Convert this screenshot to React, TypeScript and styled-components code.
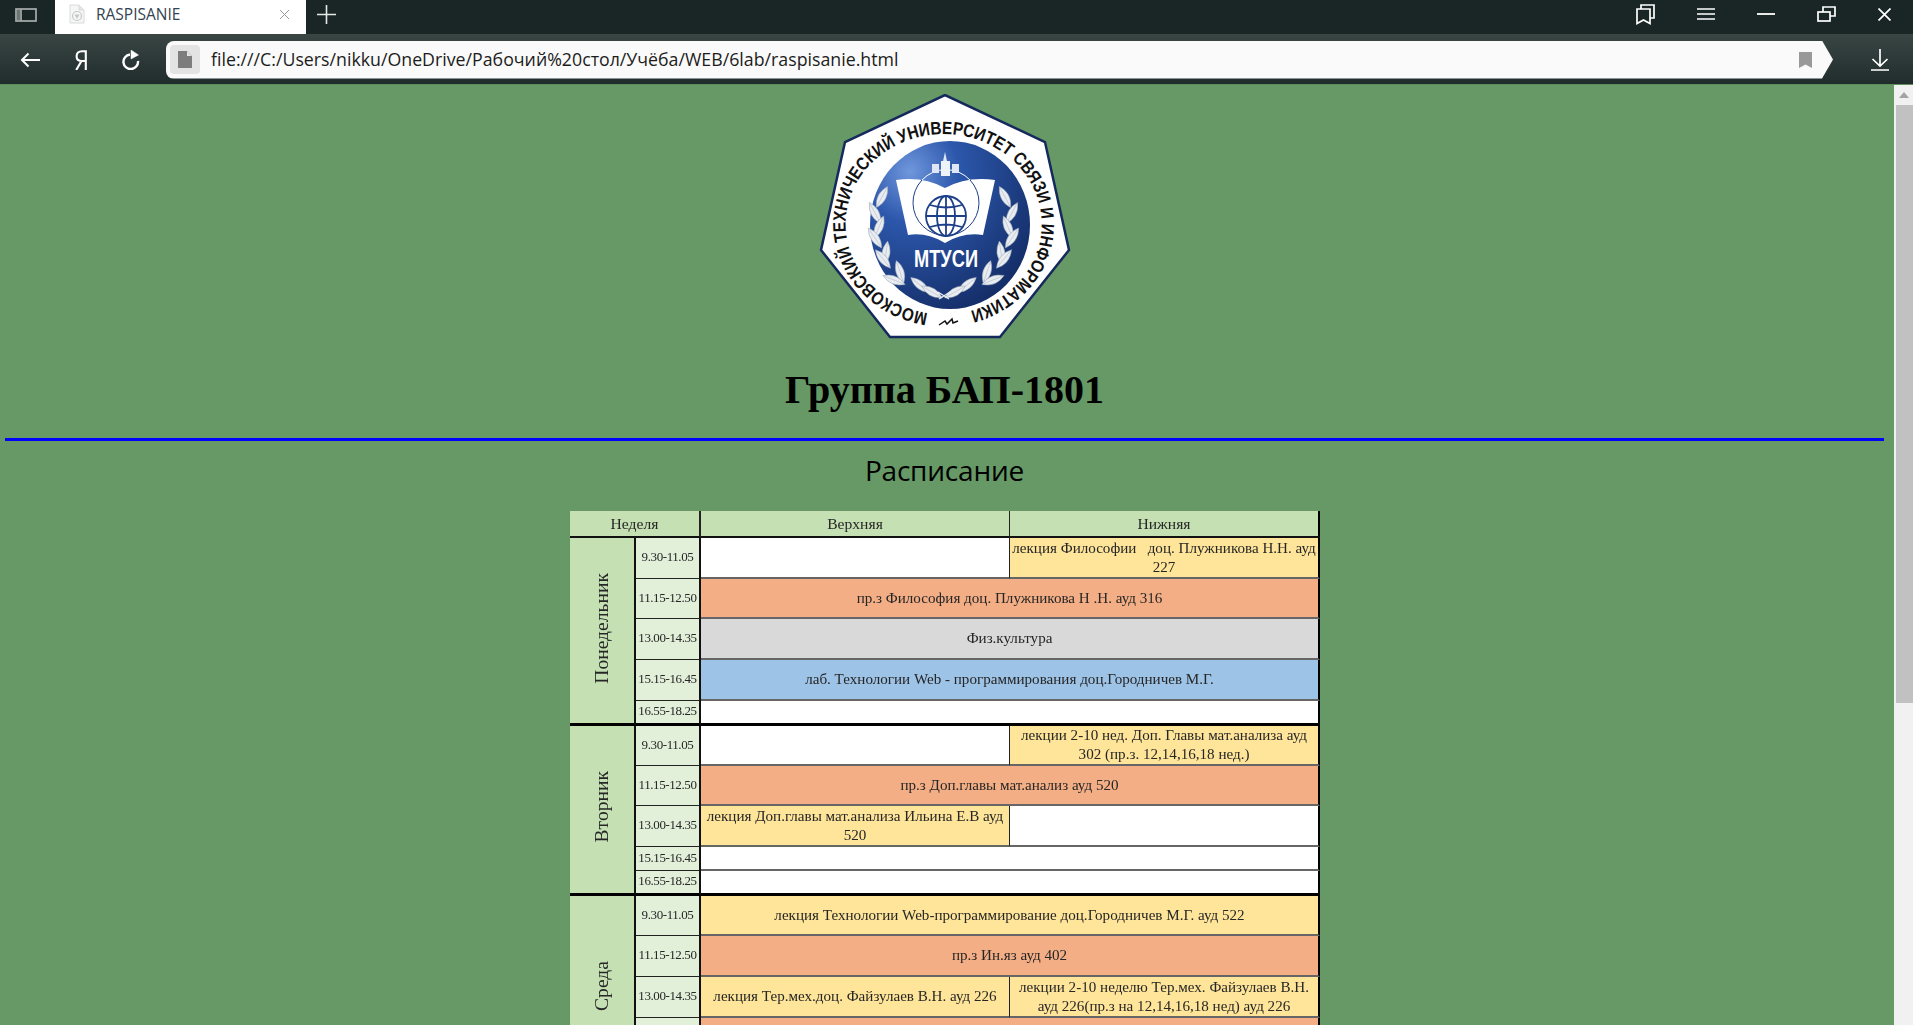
import styled, { createGlobalStyle } from 'styled-components'

const GlobalStyle = createGlobalStyle`
	html, body {
		margin: 0;
		padding: 0;
		height: 100%;
		overflow: hidden;
		background: #669966;
	}
`

const Window = styled.div`
	display: flex;
	flex-direction: column;
	width: 1913px;
	height: 1025px;
	overflow: hidden;
`

const TabBar = styled.div`
	display: flex;
	align-items: stretch;
	flex: 0 0 34px;
	background: #1a2625;
	color: #fff;
`

const SideToggle = styled.div`
	display: flex;
	align-items: center;
	width: 55px;
	padding: 0 0 4px 15px;
	box-sizing: border-box;
`

const Tab = styled.div`
	display: flex;
	align-items: center;
	width: 251px;
	padding: 0 16px 6px 14px;
	box-sizing: border-box;
	background: #fff;
	color: #33434f;
	font: 15.5px 'Open Sans', sans-serif;
`

const TabTitle = styled.span`
	flex: 1;
	margin-left: 11px;
`

const NewTab = styled.div`
	display: flex;
	align-items: center;
	flex: 1;
	margin-left: 11px;
	padding-bottom: 6px;
`

const WindowButtons = styled.div`
	display: flex;
	align-items: center;
	gap: 42px;
	padding: 0 22px 6px 0;
`

const ToolBar = styled.div`
	display: flex;
	align-items: center;
	flex: 0 0 50px;
	padding-top: 1px;
	box-sizing: border-box;
	background: linear-gradient(#3a4644, #212d2c);
`

const NavButtons = styled.div`
	display: flex;
	align-items: center;
	width: 166px;
	gap: 35px;
	padding-left: 20px;
	box-sizing: border-box;
`

const AddressBar = styled.div`
	display: flex;
	align-items: center;
	width: 1667px;
	height: 38px;
	padding-left: 4px;
	box-sizing: border-box;
	background: #fafafa;
	border-radius: 8px 0 0 8px;
	clip-path: polygon(0 0, 1656px 0, 100% 50%, 1656px 100%, 0 100%);
	color: #1c1c1c;
	font: 17.75px 'Open Sans', sans-serif;
`

const FileBadge = styled.div`
	display: flex;
	align-items: center;
	justify-content: center;
	width: 30px;
	height: 29px;
	background: #e3e3e3;
	border-radius: 4px;
`

const Url = styled.span`
	flex: 1;
	margin: 0 0 2px 11px;
`

const BookmarkSlot = styled.div`
	display: flex;
	padding-right: 21px;
`

const DownloadSlot = styled.div`
	display: flex;
	margin-left: 38px;
`

const Viewport = styled.div`
	display: flex;
	flex: 1;
	min-height: 0;
	border-top: 1px solid #5d8f5d;
	box-sizing: border-box;
`

const Page = styled.main`
	flex: 1;
	min-width: 0;
	padding: 9px 10px 0 5px;
	overflow: hidden;
	background: #669966;
	text-align: center;
`

const Crest = styled.div`
	display: flex;
	justify-content: center;
	height: 252px;
`

const Group = styled.h1`
	margin: 20px 0 24px;
	color: #000;
	font: bold 40px/48px 'Liberation Serif', serif;
`

const Rule = styled.hr`
	height: 3px;
	margin: 0;
	border: 0;
	background: #0000ff;
`

const Title = styled.h2`
	margin: 10px 0 22px;
	color: #000;
	font: 400 28px/38px 'Open Sans', sans-serif;
	letter-spacing: -0.2px;
`

const Schedule = styled.table`
	width: 750px;
	margin: 0 0 0 565px;
	border-collapse: separate;
	border-spacing: 0;
	table-layout: fixed;
	color: #262626;
	font: 15.1px/19px 'Liberation Serif', serif;
	filter: blur(0.35px);
`

const Row = styled.tr<{ $h: number }>`
	height: ${p => p.$h}px;
`

const HeadCell = styled.td`
	padding: 0;
	background: #c5e0b3;
	border-bottom: 2px solid #111;
	border-right: 1px solid #222;
	box-sizing: border-box;
	font-size: 15.6px;

	&:first-child {
		border-right-width: 2px;
	}

	&:last-child {
		border-right: 2px solid #000;
	}
`

const DayCell = styled.td`
	padding: 0;
	background: #c5e0b3;
	border-right: 2px solid #111;
	border-bottom: 3px solid #000;
	box-sizing: border-box;
	text-align: center;
	vertical-align: middle;
`

const DayName = styled.span`
	display: inline-block;
	writing-mode: vertical-rl;
	transform: rotate(180deg);
	font-size: 19.6px;
	line-height: 22px;
`

const TimeCell = styled.td<{ $end?: boolean }>`
	padding: 0 0 3px;
	background: #e2efd9;
	border-right: 2px solid #111;
	border-bottom: ${p => (p.$end ? '3px solid #000' : '1px solid #222')};
	box-sizing: border-box;
	font-size: 13px;
	letter-spacing: -0.4px;
	text-align: center;
	white-space: nowrap;
`

const SlotCell = styled.td<{ $tone?: string; $end?: boolean; $last?: boolean }>`
	padding: 0 2px;
	background: ${p => p.$tone || '#fff'};
	border-right: ${p => (p.$last ? '2px solid #000' : '1px solid #222')};
	border-bottom: ${p => (p.$end ? '3px solid #000' : '2px solid #666')};
	box-sizing: border-box;
	text-align: center;
	vertical-align: middle;
`

const ScrollBar = styled.div`
	display: flex;
	flex-direction: column;
	flex: 0 0 19px;
	align-items: flex-end;
	background: #f1f1f1;
`

const ScrollUp = styled.div`
	display: flex;
	align-items: center;
	justify-content: center;
	width: 19px;
	height: 20px;
`

const ScrollThumb = styled.div`
	width: 17px;
	height: 598px;
	background: #c1c1c1;
`

const orange = '#f4ae85'
const yellow = '#ffe599'
const gray = '#d9d9d9'
const blue = '#9dc3e6'

type Slot = { text?: string; tone?: string }
type Lesson = { time: string; h: number; upper?: Slot; lower?: Slot; both?: Slot }
type Day = { name: string; lessons: Lesson[] }

const days: Day[] = [
	{
		name: 'Понедельник',
		lessons: [
			{ time: '9.30-11.05', h: 41, upper: {}, lower: { text: 'лекция Философии \u00a0 доц. Плужникова Н.Н. ауд 227', tone: yellow } },
			{ time: '11.15-12.50', h: 40, both: { text: 'пр.з Философия доц. Плужникова Н .Н. ауд 316', tone: orange } },
			{ time: '13.00-14.35', h: 41, both: { text: 'Физ.культура', tone: gray } },
			{ time: '15.15-16.45', h: 41, both: { text: 'лаб. Технологии Web - программирования доц.Городничев М.Г.', tone: blue } },
			{ time: '16.55-18.25', h: 23, both: {} },
		],
	},
	{
		name: 'Вторник',
		lessons: [
			{ time: '9.30-11.05', h: 40, upper: {}, lower: { text: 'лекции 2-10 нед. Доп. Главы мат.анализа ауд 302 (пр.з. 12,14,16,18 нед.)', tone: yellow } },
			{ time: '11.15-12.50', h: 40, both: { text: 'пр.з Доп.главы мат.анализ ауд 520', tone: orange } },
			{ time: '13.00-14.35', h: 41, upper: { text: 'лекция Доп.главы мат.анализа Ильина Е.В ауд 520', tone: yellow }, lower: {} },
			{ time: '15.15-16.45', h: 24, both: {} },
			{ time: '16.55-18.25', h: 25, both: {} },
		],
	},
	{
		name: 'Среда',
		lessons: [
			{ time: '9.30-11.05', h: 40, both: { text: 'лекция Технологии Web-программирование доц.Городничев М.Г. ауд 522', tone: yellow } },
			{ time: '11.15-12.50', h: 41, both: { text: 'пр.з Ин.яз ауд 402', tone: orange } },
			{ time: '13.00-14.35', h: 41, upper: { text: 'лекция Тер.мех.доц. Файзулаев В.Н. ауд 226', tone: yellow }, lower: { text: 'лекции 2-10 неделю Тер.мех. Файзулаев В.Н. ауд 226(пр.з на 12,14,16,18 нед) ауд 226', tone: yellow } },
			{ time: '', h: 41, both: { tone: orange } },
			{ time: '', h: 24, both: {} },
		],
	},
]

// листья левой ветви венка: x, y, поворот
const leaves = [
	[63, 103, 118],
	[56, 119, 62],
	[60, 133, 113],
	[56, 144, 56],
	[67, 159, 98],
	[64, 165, 51],
	[81, 178, 72],
	[75, 186, 22],
	[101, 191, 39],
	[113, 198, 30],
]

const Leaf = ({ x, y, r, flip }: { x: number; y: number; r: number; flip?: boolean }) => (
	<g transform={`${flip ? 'translate(249 0) scale(-1 1) ' : ''}translate(${x} ${y}) rotate(${r})`}>
		<path d='M -12 0 Q 0 -8 12 0 Q 0 8 -12 0 Z' fill='#e9edf1' stroke='#8f9db0' strokeWidth='0.5' />
		<path d='M -10 0 H 10' stroke='#a9b4c2' strokeWidth='0.5' />
	</g>
)

const Logo = () => (
	<svg width='252' height='252' viewBox='0 0 252 252'>
		<defs>
			<radialGradient id='disc' cx='0.25' cy='0.18' r='0.95'>
				<stop offset='0' stopColor='#6f97dd' />
				<stop offset='0.32' stopColor='#2c57ab' />
				<stop offset='1' stopColor='#122a62' />
			</radialGradient>
			<path id='ring' d='M 109 219 A 98 90 0 1 1 146 218' fill='none' />
		</defs>
		<polygon
			points='126,1 226,48 250,156 181,243 71,243 2,156 26,48'
			fill='#fff'
			stroke='#16295c'
			strokeWidth='2.5'
		/>
		<ellipse cx='131' cy='131' rx='80' ry='84' fill='url(#disc)' />
		<text fontFamily="'Liberation Sans', sans-serif" fontWeight='700' fontSize='18' fill='#111'>
			<textPath href='#ring' textLength='548' lengthAdjust='spacingAndGlyphs'>
				МОСКОВСКИЙ ТЕХНИЧЕСКИЙ УНИВЕРСИТЕТ СВЯЗИ И ИНФОРМАТИКИ
			</textPath>
		</text>
		{/* раскрытая книга */}
		<path d='M 77 86 Q 104 82 126 94 Q 148 82 176 86 L 164 141 Q 144 138 126 149 Q 108 138 89 141 Z' fill='#fff' />
		<path d='M 103 86 A 33 33 0 0 1 151 86' fill='none' stroke='#fff' strokeWidth='1' />
		<path d='M 103 86 A 33 33 0 1 0 151 86' fill='none' stroke='#1d3f8a' strokeWidth='1' />
		{/* глобус */}
		<g fill='none' stroke='#1d3f8a' strokeWidth='1.8'>
			<circle cx='127' cy='122' r='20' />
			<ellipse cx='127' cy='122' rx='9' ry='20' />
			<path d='M 127 102 V 142 M 107 122 H 147 M 111 111 Q 127 116 143 111 M 111 133 Q 127 128 143 133' />
		</g>
		{/* спутник */}
		<path d='M 126 58 L 128 67 H 124 Z' fill='#dfe7f4' />
		<rect x='122' y='67' width='9' height='15' fill='#eef2f9' />
		<rect x='113' y='70' width='7' height='9' fill='#dfe7f4' />
		<rect x='133' y='70' width='7' height='9' fill='#dfe7f4' />
		<text
			x='127'
			y='173'
			textAnchor='middle'
			fontFamily="'Liberation Sans', sans-serif"
			fontWeight='700'
			fontSize='23.5'
			fill='#fff'
			textLength='64'
			lengthAdjust='spacingAndGlyphs'
		>
			МТУСИ
		</text>
		{/* венок */}
		{leaves.map(([x, y, r]) => (
			<Leaf key={`l${x}${y}`} x={x} y={y} r={r} />
		))}
		{leaves.map(([x, y, r]) => (
			<Leaf key={`r${x}${y}`} x={x} y={y} r={r} flip />
		))}
		<path d='M 119 198 L 130 205 M 131 198 L 120 205' stroke='#e9edf1' strokeWidth='1.4' />
		<path d='M 120 231 L 126 227 L 128 230 L 133 225 L 134 229 L 139 227' fill='none' stroke='#111' strokeWidth='1.5' />
	</svg>
)

export default function App() {
	return (
		<Window>
			<GlobalStyle />
			<TabBar>
				<SideToggle>
					<svg width='22' height='14' viewBox='0 0 22 14' fill='none' stroke='#a9adac' strokeWidth='1.7'>
						<rect x='1' y='1' width='20' height='12' />
						<path d='M 6 1 V 13' strokeWidth='1.7' />
						<path d='M 2 2 H 5 V 12 H 2 Z' fill='#6d7675' stroke='none' />
					</svg>
				</SideToggle>
				<Tab>
					<svg width='16' height='20' viewBox='0 0 16 20'>
						<path d='M 1 1 H 10 L 15 6 V 19 H 1 Z' fill='#f6f6f6' stroke='#dadada' />
						<path d='M 10 1 V 6 H 15' fill='#e6e6e6' stroke='#dadada' />
						<circle cx='8' cy='12' r='4.5' fill='none' stroke='#c3c9c9' strokeWidth='1.2' />
						<path d='M 5.5 10.5 H 10.5 L 8 15 Z' fill='#c3c9c9' />
					</svg>
					<TabTitle>RASPISANIE</TabTitle>
					<svg width='11' height='11' viewBox='0 0 11 11' stroke='#9a9a9a' strokeWidth='1'>
						<path d='M 1 1 L 10 10 M 10 1 L 1 10' />
					</svg>
				</Tab>
				<NewTab>
					<svg width='19' height='19' viewBox='0 0 19 19' stroke='#e4e8e7' strokeWidth='1.6'>
						<path d='M 9.5 0 V 19 M 0 9.5 H 19' />
					</svg>
				</NewTab>
				<WindowButtons>
					<svg width='19' height='21' viewBox='0 0 19 21' fill='none' stroke='#fff' strokeWidth='1.7'>
						<path d='M 5 5 V 1 H 18 V 14 H 14' />
						<path d='M 1 5 H 14 V 19.5 L 7.5 16 L 1 19.5 Z' />
					</svg>
					<svg width='18' height='12' viewBox='0 0 18 12' stroke='#fff' strokeWidth='1.7'>
						<path d='M 0 1 H 18 M 0 6 H 18 M 0 11 H 18' />
					</svg>
					<svg width='18' height='2' viewBox='0 0 18 2' stroke='#fff' strokeWidth='1.8'>
						<path d='M 0 1 H 18' />
					</svg>
					<svg width='19' height='16' viewBox='0 0 19 16' fill='none' stroke='#fff' strokeWidth='1.7'>
						<rect x='1' y='6' width='12' height='9' />
						<path d='M 6 6 V 1 H 18 V 10 H 13' />
					</svg>
					<svg width='13' height='13' viewBox='0 0 13 13' stroke='#fff' strokeWidth='1.7'>
						<path d='M 0.5 0.5 L 12.5 12.5 M 12.5 0.5 L 0.5 12.5' />
					</svg>
				</WindowButtons>
			</TabBar>
			<ToolBar>
				<NavButtons>
					<svg width='20' height='16' viewBox='0 0 20 16' fill='none' stroke='#fff' strokeWidth='2'>
						<path d='M 20 8 H 2 M 8.5 1.5 L 2 8 L 8.5 14.5' />
					</svg>
					<svg width='12' height='20' viewBox='0 0 12 20' fill='none' stroke='#fff' strokeWidth='2.1'>
						<path d='M 10.8 20 V 1.2 H 7 Q 1.6 1.2 1.6 6.2 Q 1.6 11 7 11 H 10.8 M 6.5 11 L 1.2 20' />
					</svg>
					<svg width='18' height='20' viewBox='0 0 18 20' fill='none' stroke='#fff' strokeWidth='2.4'>
						<path d='M 8 4.5 A 7.3 7.3 0 1 0 16 11' />
						<path d='M 9 0 L 16.5 5 L 9 9 Z' fill='#fff' strokeWidth='0.5' />
					</svg>
				</NavButtons>
				<AddressBar>
					<FileBadge>
						<svg width='14' height='17' viewBox='0 0 14 17'>
							<path d='M 0 0 H 9 L 14 5 V 17 H 0 Z' fill='#7d7d7d' />
							<path d='M 9 0 V 5 H 14 Z' fill='#e3e3e3' />
						</svg>
					</FileBadge>
					<Url>file:///C:/Users/nikku/OneDrive/Рабочий%20стол/Учёба/WEB/6lab/raspisanie.html</Url>
					<BookmarkSlot>
						<svg width='13' height='16' viewBox='0 0 13 16'>
							<path d='M 0 0 H 13 V 16 L 6.5 12.5 L 0 16 Z' fill='#999' />
						</svg>
					</BookmarkSlot>
				</AddressBar>
				<DownloadSlot>
					<svg width='18' height='22' viewBox='0 0 18 22' fill='none' stroke='#fff' strokeWidth='1.7'>
						<path d='M 9 0 V 17 M 1.5 10 L 9 17 L 16.5 10 M 0 21 H 18' />
					</svg>
				</DownloadSlot>
			</ToolBar>
			<Viewport>
				<Page>
					<Crest>
						<Logo />
					</Crest>
					<Group>Группа БАП-1801</Group>
					<Rule />
					<Title>Расписание</Title>
					<Schedule>
						<colgroup>
							<col width='66' />
							<col width='65' />
							<col width='309' />
							<col width='310' />
						</colgroup>
						<tbody>
							<Row $h={27}>
								<HeadCell colSpan={2}>Неделя</HeadCell>
								<HeadCell>Верхняя</HeadCell>
								<HeadCell>Нижняя</HeadCell>
							</Row>
							{days.flatMap(day =>
								day.lessons.map((lesson, i) => {
									const end = i === day.lessons.length - 1
									return (
										<Row key={`${day.name}${i}`} $h={lesson.h}>
											{i === 0 && (
												<DayCell rowSpan={day.lessons.length}>
													<DayName>{day.name}</DayName>
												</DayCell>
											)}
											<TimeCell $end={end}>{lesson.time}</TimeCell>
											{lesson.both ? (
												<SlotCell colSpan={2} $tone={lesson.both.tone} $end={end} $last>
													{lesson.both.text}
												</SlotCell>
											) : (
												<>
													<SlotCell $tone={lesson.upper?.tone} $end={end}>
														{lesson.upper?.text}
													</SlotCell>
													<SlotCell $tone={lesson.lower?.tone} $end={end} $last>
														{lesson.lower?.text}
													</SlotCell>
												</>
											)}
										</Row>
									)
								})
							)}
						</tbody>
					</Schedule>
				</Page>
				<ScrollBar>
					<ScrollUp>
						<svg width='10' height='6' viewBox='0 0 10 6'>
							<path d='M 0 6 L 5 0 L 10 6 Z' fill='#a3a3a3' />
						</svg>
					</ScrollUp>
					<ScrollThumb />
				</ScrollBar>
			</Viewport>
		</Window>
	)
}
